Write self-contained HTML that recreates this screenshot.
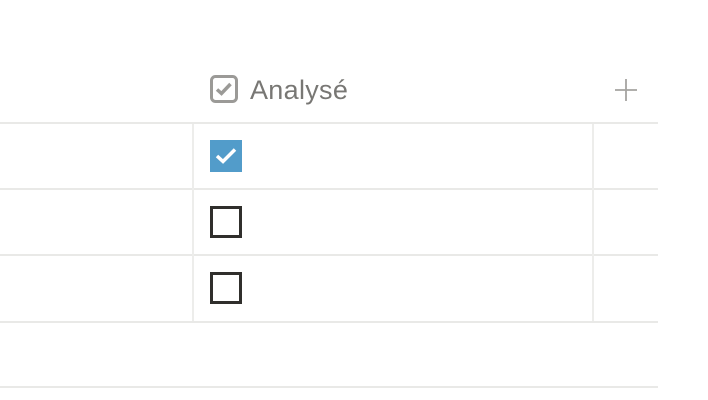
<!DOCTYPE html>
<html><head><style>
body{margin:0;width:708px;height:400px;background:#fff;position:relative;overflow:hidden;font-family:"Liberation Sans",sans-serif}
.h{position:absolute;background:#e9e9e7;height:2px;left:0;width:658px}
.v{position:absolute;background:#ededeb;width:2px}
.cb{position:absolute;left:210px;border:3px solid #302f2c;box-sizing:border-box;width:32px;height:32px}
</style></head><body>
<svg style="position:absolute;left:210px;top:75px" width="28" height="28" viewBox="0 0 28 28">
<rect x="1.5" y="1.5" width="25" height="25" rx="4" fill="none" stroke="#9b9a97" stroke-width="3"/>
<path d="M7 14.5l4.5 4 9-9.5" fill="none" stroke="#9b9a97" stroke-width="3.5"/>
</svg>
<div style="position:absolute;left:250px;top:74px;font-size:27px;color:#787774;line-height:32px;letter-spacing:0.3px">Analysé</div>
<svg style="position:absolute;left:615px;top:79px" width="22" height="22" viewBox="0 0 22 22">
<path d="M11 0v22M0 11h22" stroke="#a5a4a1" stroke-width="1.8"/>
</svg>
<div class="h" style="top:122px"></div>
<div class="h" style="top:188px"></div>
<div class="h" style="top:254px"></div>
<div class="h" style="top:321px"></div>
<div class="h" style="top:386px"></div>
<div class="v" style="left:192px;top:124px;height:197px"></div>
<div class="v" style="left:592px;top:124px;height:197px"></div>
<svg style="position:absolute;left:210px;top:140px" width="32" height="32" viewBox="0 0 32 32">
<rect width="32" height="32" fill="#529cca"/>
<path d="M7 16l6 5.5 12-12" fill="none" stroke="#fff" stroke-width="3.5"/>
</svg>
<div class="cb" style="top:206px"></div>
<div class="cb" style="top:272px"></div>
</body></html>
